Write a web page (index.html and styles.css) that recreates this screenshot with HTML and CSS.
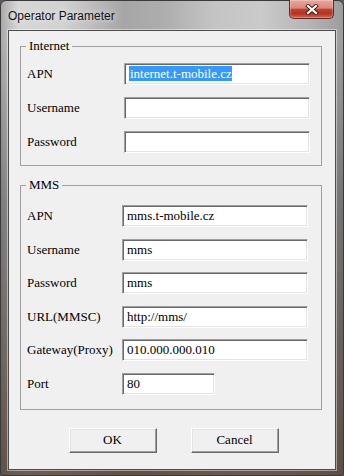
FILE: index.html
```html
<!DOCTYPE html>
<html lang="en">
<head>
    <meta charset="UTF-8">
    <title>Operator Parameter</title>
    <link rel="stylesheet" href="styles.css">
</head>
<body>
    <div class="window">
        <div class="titlebar">
            <span class="title">Operator Parameter</span>
            <button class="close-btn" aria-label="Close">
                <svg width="14" height="11" viewBox="0 0 14 11">
                    <path d="M3 2 L11 9 M11 2 L3 9" stroke="#4a1c18" stroke-width="4" stroke-linecap="square" fill="none"/>
                    <path d="M3 2 L11 9 M11 2 L3 9" stroke="#fff" stroke-width="2.2" stroke-linecap="square" fill="none"/>
                </svg>
            </button>
        </div>

        <div class="client">
            <fieldset class="group group-internet">
                <legend>Internet</legend>
                <div class="rows">
                    <label>APN</label>
                    <div class="edit"><span class="selected">internet.t-mobile.cz</span></div>
                    <label>Username</label>
                    <div class="edit"></div>
                    <label>Password</label>
                    <div class="edit"></div>
                </div>
            </fieldset>

            <fieldset class="group group-mms">
                <legend>MMS</legend>
                <div class="rows">
                    <label>APN</label>
                    <div class="edit">mms.t-mobile.cz</div>
                    <label>Username</label>
                    <div class="edit">mms</div>
                    <label>Password</label>
                    <div class="edit">mms</div>
                    <label>URL(MMSC)</label>
                    <div class="edit">http://mms/</div>
                    <label>Gateway(Proxy)</label>
                    <div class="edit">010.000.000.010</div>
                    <label>Port</label>
                    <div class="edit short">80</div>
                </div>
            </fieldset>

            <div class="buttons">
                <button class="btn">OK</button>
                <button class="btn">Cancel</button>
            </div>
        </div>
    </div>
</body>
</html>
```

FILE: styles.css
```css
* {
    margin: 0;
    padding: 0;
    box-sizing: border-box;
}

body {
    width: 344px;
    height: 476px;
    overflow: hidden;
    font-family: "Liberation Serif", "Times New Roman", serif;
    font-size: 13px;
    color: #000;
    background: #5a5a5a;
}

/* window frame */
.window {
    height: 476px;
    display: flex;
    flex-direction: column;
    padding: 0 7px 5px;
    border: 1px solid #3a3a3a;
    border-radius: 6px 6px 3px 3px;
    background:
        linear-gradient(180deg, rgba(0, 0, 0, 0) 0, rgba(0, 0, 0, 0) 40px, rgba(40, 40, 40, 0.35) 200px, rgba(70, 52, 36, 0.75) 100%),
        linear-gradient(90deg, #a9a9a9 0%, #d6d6d6 5%, #d2d2d2 18%, #a6a6a6 36%, #aeaeae 48%, #c4c4c4 62%, #cacaca 76%, #b5b5b5 90%, #9c9c9c 100%);
}

.titlebar {
    height: 29px;
    display: flex;
    justify-content: space-between;
    align-items: flex-start;
}

.title {
    font-family: "Liberation Sans", Arial, sans-serif;
    font-size: 12px;
    line-height: 14px;
    padding-top: 8px;
    color: #111;
    text-shadow: 0 0 6px rgba(255, 255, 255, 0.9);
}

.close-btn {
    width: 45px;
    height: 19px;
    margin: -1px 2px 0 0;
    display: flex;
    align-items: center;
    justify-content: center;
    border: 1px solid #5b2a24;
    border-top: none;
    border-radius: 0 0 5px 5px;
    background: linear-gradient(180deg, #e8a89c 0%, #d8887a 45%, #c4412f 52%, #b53322 75%, #d8634d 100%);
    box-shadow: inset 0 0 0 1px rgba(255, 255, 255, 0.25);
}

/* client area */
.client {
    flex: 1;
    background: #f0f0f0;
    border: 1px solid #4d4d4d;
    box-shadow: 0 0 0 1px rgba(255, 255, 255, 0.45);
}

.group {
    border: 1px solid #a0a0a0;
    margin: 8px 13px 0 11px;
}

.group legend {
    line-height: 14px;
    padding: 0 3px;
}

.group-internet {
    padding: 10px 11px 12px 5px;
}

.group-mms {
    margin-top: 12px;
    padding: 13px 13px 14px 5px;
}

.rows {
    display: grid;
    align-items: center;
}

.group-internet .rows {
    grid-template-columns: 98px 1fr;
    row-gap: 12px;
}

.group-mms .rows {
    grid-template-columns: 96px 1fr;
    row-gap: 11.6px;
}

.rows label {
    padding-left: 1px;
    white-space: nowrap;
}

/* sunken edit box */
.edit {
    height: 22px;
    line-height: 20px;
    padding-left: 4px;
    background: #fff;
    white-space: nowrap;
    overflow: hidden;
    border: 1px solid;
    border-color: #a0a0a0 #fff #fff #a0a0a0;
    box-shadow: inset 1px 1px 0 #696969, inset -1px -1px 0 #e3e3e3;
}

.edit.short {
    width: 93px;
}

.selected {
    background: #3399ff;
    color: #fff;
    padding-left: 1px;
}

/* dialog buttons */
.buttons {
    display: flex;
    justify-content: center;
    gap: 34px;
    margin-top: 18px;
    padding-left: 3px;
}

.btn {
    width: 88px;
    height: 25px;
    font-family: "Liberation Serif", "Times New Roman", serif;
    font-size: 13px;
    color: #000;
    background: #f0f0f0;
    border: 1px solid;
    border-color: #fff #696969 #696969 #fff;
    box-shadow: inset -1px -1px 0 #a0a0a0, inset 1px 1px 0 #e3e3e3;
}
```
